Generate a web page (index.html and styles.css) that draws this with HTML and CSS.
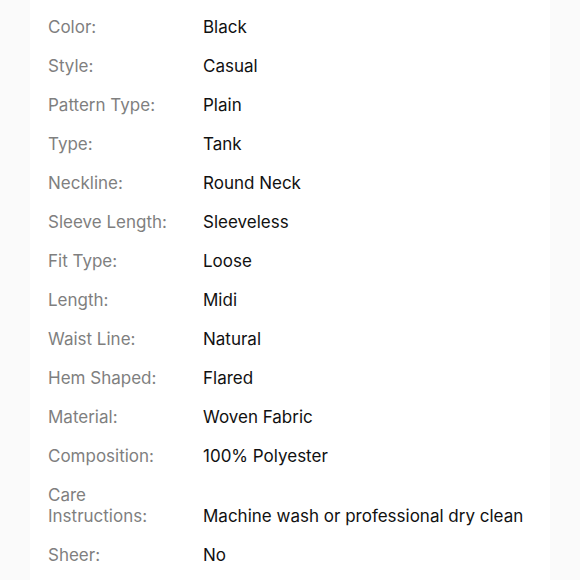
FILE: index.html
```html
<!DOCTYPE html>
<html lang="en">
<head>
<meta charset="utf-8">
<title>Product details</title>
<link rel="stylesheet" href="styles.css">
</head>
<body>
<div class="panel">
  <dl class="specs">
    <div class="row"><dt>Color:</dt><dd>Black</dd></div>
    <div class="row"><dt>Style:</dt><dd>Casual</dd></div>
    <div class="row"><dt>Pattern Type:</dt><dd>Plain</dd></div>
    <div class="row"><dt>Type:</dt><dd>Tank</dd></div>
    <div class="row"><dt>Neckline:</dt><dd>Round Neck</dd></div>
    <div class="row"><dt>Sleeve Length:</dt><dd>Sleeveless</dd></div>
    <div class="row"><dt>Fit Type:</dt><dd>Loose</dd></div>
    <div class="row"><dt>Length:</dt><dd>Midi</dd></div>
    <div class="row"><dt>Waist Line:</dt><dd>Natural</dd></div>
    <div class="row"><dt>Hem Shaped:</dt><dd>Flared</dd></div>
    <div class="row"><dt>Material:</dt><dd>Woven Fabric</dd></div>
    <div class="row"><dt>Composition:</dt><dd>100% Polyester</dd></div>
    <div class="row"><dt>Care Instructions:</dt><dd>Machine wash or professional dry clean</dd></div>
    <div class="row"><dt>Sheer:</dt><dd>No</dd></div>
  </dl>
</div>
</body>
</html>
```
FILE: styles.css
```css
html, body {
  margin: 0;
  padding: 0;
  background: #fafafa;
}
body {
  font-family: Inter, "Liberation Sans", Arial, sans-serif;
  font-size: 17px;
  line-height: 21px;
}
.panel {
  margin-left: 30px;
  width: 520px;
  min-height: 580px;
  background: #ffffff;
  padding: 8px 0 0 18px;
  box-sizing: border-box;
}
.specs {
  margin: 0;
}
.row {
  display: flex;
  align-items: flex-end;
  padding: 9px 0;
}
dt {
  width: 130px;
  margin-right: 25px;
  color: #7f7f7f;
}
dd {
  margin: 0;
  color: #111111;
}
```
